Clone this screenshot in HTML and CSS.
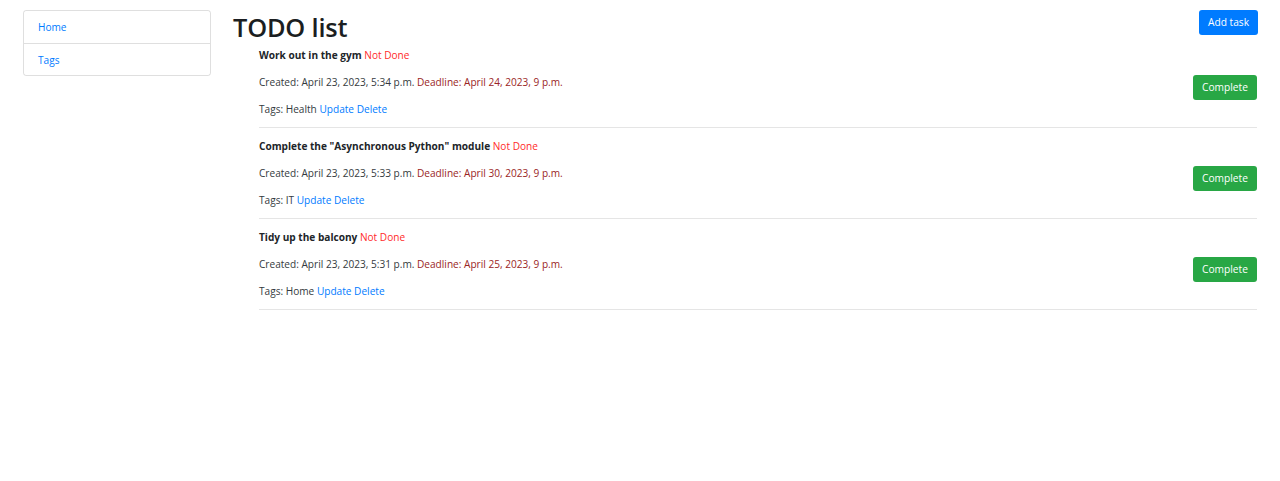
FILE: index.html
```html
<!DOCTYPE html>
<html lang="en">
<head>
<meta charset="utf-8">
<title>TODO list</title>
<link rel="stylesheet" href="styles.css">
</head>
<body>
<div class="layout">
  <aside class="sidebar">
    <nav class="list-group">
      <a class="list-item" href="#">Home</a>
      <a class="list-item" href="#">Tags</a>
    </nav>
  </aside>
  <main class="main">
    <header class="header">
      <h1 class="title">TODO list</h1>
      <a class="btn btn-primary" href="#">Add task</a>
    </header>
    <ul class="tasks">
      <li class="task">
        <div class="task-row">
          <div class="task-info">
            <p class="line"><strong>Work out in the gym</strong> <span class="status">Not Done</span></p>
            <p class="line">Created: April 23, 2023, 5:34 p.m. <span class="deadline">Deadline: April 24, 2023, 9 p.m.</span></p>
            <p class="line">Tags: Health <a href="#">Update</a> <a href="#">Delete</a></p>
          </div>
          <a class="btn btn-success" href="#">Complete</a>
        </div>
        <hr class="sep">
      </li>
      <li class="task">
        <div class="task-row">
          <div class="task-info">
            <p class="line"><strong>Complete the "Asynchronous Python" module</strong> <span class="status">Not Done</span></p>
            <p class="line">Created: April 23, 2023, 5:33 p.m. <span class="deadline">Deadline: April 30, 2023, 9 p.m.</span></p>
            <p class="line">Tags: IT <a href="#">Update</a> <a href="#">Delete</a></p>
          </div>
          <a class="btn btn-success" href="#">Complete</a>
        </div>
        <hr class="sep">
      </li>
      <li class="task">
        <div class="task-row">
          <div class="task-info">
            <p class="line"><strong>Tidy up the balcony</strong> <span class="status">Not Done</span></p>
            <p class="line">Created: April 23, 2023, 5:31 p.m. <span class="deadline">Deadline: April 25, 2023, 9 p.m.</span></p>
            <p class="line">Tags: Home <a href="#">Update</a> <a href="#">Delete</a></p>
          </div>
          <a class="btn btn-success" href="#">Complete</a>
        </div>
        <hr class="sep">
      </li>
    </ul>
  </main>
</div>
</body>
</html>
```

FILE: styles.css
```css
* { box-sizing: border-box; }

html, body {
  margin: 0;
  padding: 0;
  background: #fff;
}

body {
  font-family: "Open Sans", "Noto Sans", "Liberation Sans", sans-serif;
  font-size: 10.1px;
  line-height: 16px;
  color: #212529;
}

a {
  color: #007bff;
  text-decoration: none;
}

.layout {
  display: flex;
  align-items: flex-start;
  padding: 10px 23px 0 23px;
  gap: 22px;
}

.sidebar {
  width: 188px;
  flex: none;
}

.list-group {
  display: flex;
  flex-direction: column;
  border: 1px solid rgba(0, 0, 0, 0.125);
  border-radius: 3px;
}

.list-item {
  display: block;
  padding: 8px 14px;
  height: 32px;
}

.list-item + .list-item {
  border-top: 1px solid rgba(0, 0, 0, 0.125);
}

.main {
  flex: 1;
  min-width: 0;
}

.header {
  display: flex;
  justify-content: space-between;
  align-items: flex-start;
}

.title {
  margin: 0 0 3px 0;
  font-size: 25.4px;
  line-height: 34px;
  font-weight: 600;
  letter-spacing: -0.2px;
  color: #1b1e21;
}

.btn {
  display: inline-block;
  color: #fff;
  border-radius: 3px;
  padding: 4px 8px;
  line-height: 17px;
  font-size: 10.2px;
  white-space: nowrap;
}

.btn-primary {
  background: #007bff;
  width: 59px;
  text-align: center;
  margin-right: -1px;
}

.btn-success {
  background: #28a745;
  width: 64px;
  text-align: center;
}

.tasks {
  list-style: none;
  margin: 0;
  padding: 0 0 0 26px;
}

.task-row {
  display: flex;
  justify-content: space-between;
  align-items: center;
}

.line {
  margin: 0 0 11px 0;
  color: #343a40;
}

.line:last-child {
  margin-bottom: 10px;
}

.line strong {
  font-weight: 700;
  color: #212529;
}

.status {
  color: #ff2a2a;
}

.deadline {
  color: #9a2525;
}

.sep {
  margin: 0 0 10px 0;
  border: 0;
  border-top: 1px solid rgba(0, 0, 0, 0.1);
}
```
